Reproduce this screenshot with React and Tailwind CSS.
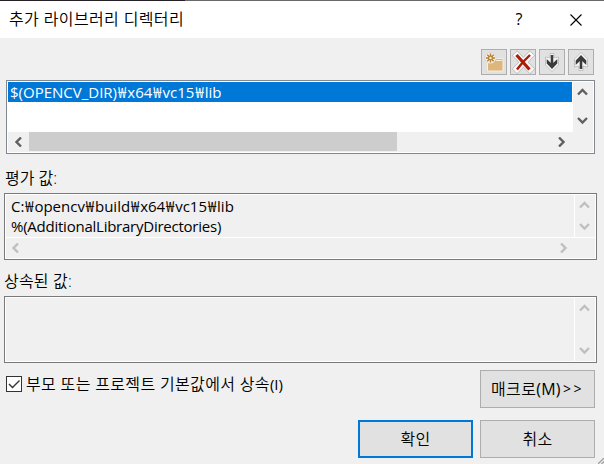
import React from "react";

const chevrons = {
  up: "M1 6.5 L5.5 2 L10 6.5",
  down: "M1 2 L5.5 6.5 L10 2",
  left: "M7 0.5 L2.5 5 L7 9.5",
  right: "M2 0.5 L6.5 5 L2 9.5",
};

function Chevron({ dir, muted }) {
  const vertical = dir === "up" || dir === "down";
  return (
    <svg
      width={vertical ? 11 : 9}
      height={vertical ? 9 : 10}
      className={muted ? "block text-[#bfbfbf]" : "block text-[#606060]"}
      fill="none"
      stroke="currentColor"
      strokeWidth="2.4"
    >
      <path d={chevrons[dir]} />
    </svg>
  );
}

function ToolButton({ children }) {
  return (
    <button className="flex h-[26px] w-[26px] items-center justify-center border border-[#adadad] bg-[#e1e1e1]">
      {children}
    </button>
  );
}

function ArrowIcon({ flip }) {
  return (
    <svg width="24" height="24" viewBox="0 0 24 24" className={flip ? "rotate-180" : ""}>
      <path
        d="M10 3.5H14V8L18.5 7V15L12 21.5L5.5 15V7L10 8Z"
        fill="#f8f8f8"
        stroke="#b8b8b8"
        strokeWidth="0.8"
      />
      <path d="M12 5V17" stroke="#3c3c3c" strokeWidth="2.6" />
      <path d="M6.7 9L12 14L17.3 9V13.5L12 19L6.7 13.5Z" fill="#3c3c3c" />
    </svg>
  );
}

function PushButton({ primary, children }) {
  return (
    <button
      className={
        "flex h-[38px] w-[115px] items-center justify-center bg-[#e1e1e1] text-[16px] font-light tracking-[0.3px] whitespace-nowrap " +
        (primary ? "border-2 border-[#0078d7]" : "border border-[#adadad]")
      }
    >
      {children}
    </button>
  );
}

function Path({ parts, wide }) {
  return parts.map((part, i) => (
    <React.Fragment key={i}>
      {i > 0 && <span className={wide ? "mx-[1px]" : "mx-[0.9px]"}>₩</span>}
      {part}
    </React.Fragment>
  ));
}

export default function App() {
  return (
    <div className="flex h-[464px] w-[604px] flex-col overflow-hidden bg-[#f0f0f0] font-['Open_Sans','Noto_Sans_CJK_KR_DemiLight','Noto_Sans_CJK_KR',sans-serif] text-[15px] leading-5 text-black">
      <div className="flex h-px shrink-0">
        <div className="w-[185px] bg-[#252025]" />
        <div className="flex-1 bg-[#6a6a6a]" />
      </div>
      <header className="flex h-[37px] shrink-0 items-center bg-white pl-[9px]">
        <h1 className="flex-1 pb-[2px] text-[16px] font-light tracking-[0.37px] whitespace-nowrap">추가 라이브러리 디렉터리</h1>
        <span className="mr-px w-[10px] pb-px text-center text-[16px]">?</span>
        <svg width="12" height="12" className="mr-[22px] ml-[45px]" stroke="#000" strokeWidth="1.1">
          <path d="M0.5 0.5L11.5 11.5M11.5 0.5L0.5 11.5" />
        </svg>
      </header>

      <div className="flex h-[42px] shrink-0 justify-end gap-[3px] pt-[11px] pr-[10px]">
        <ToolButton>
          <svg width="24" height="24" viewBox="0 0 24 24">
            <path d="M5.5 10H12L14 8.5H21V21H5.5Z" fill="#dcb67a" stroke="#f6f0e4" />
            <path d="M14 10.5H20" stroke="#f6f0e4" />
            <circle cx="8.5" cy="8" r="5.5" fill="#f6f0e4" stroke="#d2c6b0" strokeWidth="0.5" />
            <path d="M8.5 3.5V12.5M4 8H13M5.3 4.8L11.7 11.2M11.7 4.8L5.3 11.2" stroke="#b58035" strokeWidth="1.4" />
            <circle cx="8.5" cy="8" r="2.4" fill="#b58035" />
            <circle cx="8.5" cy="8" r="1.2" fill="#f6f0e4" />
          </svg>
        </ToolButton>
        <ToolButton>
          <svg width="24" height="24" viewBox="0 0 24 24" fill="none">
            <path d="M6 5.5L19 19M19 5.5L6 19" stroke="#bcbcbc" strokeWidth="7.4" strokeLinecap="square" />
            <path d="M6 5.5L19 19M19 5.5L6 19" stroke="#f8f8f8" strokeWidth="6" strokeLinecap="square" />
            <path d="M5.5 5L18.5 19.5" stroke="#ad1b04" strokeWidth="3.2" />
            <path d="M19 5L12 12L6 19.5" stroke="#ad1b04" strokeWidth="2.4" />
          </svg>
        </ToolButton>
        <ToolButton><ArrowIcon /></ToolButton>
        <ToolButton><ArrowIcon flip /></ToolButton>
      </div>

      <section className="mr-[9px] ml-[6px] flex h-[74px] shrink-0 flex-col border border-[#828790] bg-white p-px">
        <div className="flex h-[50px]">
          <div className="w-[565px] bg-white">
            <div className="h-5 w-[564px] bg-[#0078d7] pl-[2px] whitespace-nowrap text-white">
              <Path parts={["$(OPENCV_DIR)", "x64", "vc15", "lib"]} wide />
            </div>
          </div>
          <div className="flex flex-1 flex-col items-center justify-between bg-[#f0f0f0] pt-[6px] pr-px pb-[7px]">
            <Chevron dir="up" />
            <Chevron dir="down" />
          </div>
        </div>
        <div className="flex h-5 items-center bg-[#f0f0f0] pb-px">
          <div className="flex w-[21px] justify-center pr-px"><Chevron dir="left" /></div>
          <div className="h-[19px] w-[368px] bg-[#cdcdcd]" />
          <div className="ml-[160px]"><Chevron dir="right" /></div>
        </div>
      </section>

      <div className="flex h-[39px] shrink-0 items-end pb-[5px] pl-[5px] text-[16px] font-light"><span>평가 값:</span></div>
      <section className="mr-[7px] ml-1 flex h-[67px] shrink-0 flex-col border border-[#7a7a7a] bg-white p-px">
        <div className="flex h-[42px] gap-px">
          <div className="w-[568px] bg-[#f0f0f0] pt-px pl-[5px] whitespace-nowrap">
            <div><Path parts={["C:", "opencv", "build", "x64", "vc15", "lib"]} /></div>
            <div className="tracking-[-0.24px]">%(AdditionalLibraryDirectories)</div>
          </div>
          <div className="flex flex-1 flex-col items-center justify-between bg-[#f0f0f0] pt-[6px] pr-px pb-[6px]">
            <Chevron dir="up" muted />
            <Chevron dir="down" muted />
          </div>
        </div>
        <div className="mt-px flex flex-1 items-center bg-[#f0f0f0] pb-px pl-[5px]">
          <Chevron dir="left" muted />
          <div className="ml-[539px]"><Chevron dir="right" muted /></div>
        </div>
      </section>

      <div className="flex h-9 shrink-0 items-end pb-[5px] pl-1 text-[16px] font-light tracking-[0.2px]"><span>상속된 값:</span></div>
      <section className="mr-[7px] ml-1 flex h-[67px] shrink-0 gap-px border border-[#7a7a7a] bg-white p-px">
        <div className="w-[568px] bg-[#f0f0f0]" />
        <div className="flex flex-1 flex-col items-center justify-between bg-[#f0f0f0] pt-[6px] pr-px pb-[6px]">
          <Chevron dir="up" muted />
          <Chevron dir="down" muted />
        </div>
      </section>

      <div className="flex h-[52px] shrink-0 items-start pt-[7px] pr-[9px] pl-[6px]">
        <label className="mt-[4px] flex flex-1 items-center gap-[4px] whitespace-nowrap">
          <span className="flex h-4 w-4 items-center justify-center border border-[#333] bg-white">
            <svg width="14" height="14" fill="none" stroke="#333" strokeWidth="1.4"><path d="M2 7L5.5 10.5L12.5 3.5" /></svg>
          </span>
          <span className="text-[16px] font-light tracking-[0.34px]">
            부모 또는 프로젝트 기본값에서 상속<span className="text-[15px] font-normal tracking-normal">(I)</span>
          </span>
        </label>
        <PushButton>
          <span className="pb-px">매크로<span className="font-normal">(M)</span></span>
          <span className="ml-[2px] text-[14px] font-normal tracking-[2.5px]">&gt;&gt;</span>
        </PushButton>
      </div>
      <div className="flex flex-1 justify-end gap-[7px] pt-[5px] pr-[9px]">
        <PushButton primary>확인</PushButton>
        <PushButton>취소</PushButton>
      </div>
      <svg width="6" height="6" className="absolute top-[458px] left-[598px]" stroke="#a0a0a0" strokeWidth="1.3">
        <path d="M0 6L6 0M3.5 6L6 3.5" />
      </svg>
    </div>
  );
}
